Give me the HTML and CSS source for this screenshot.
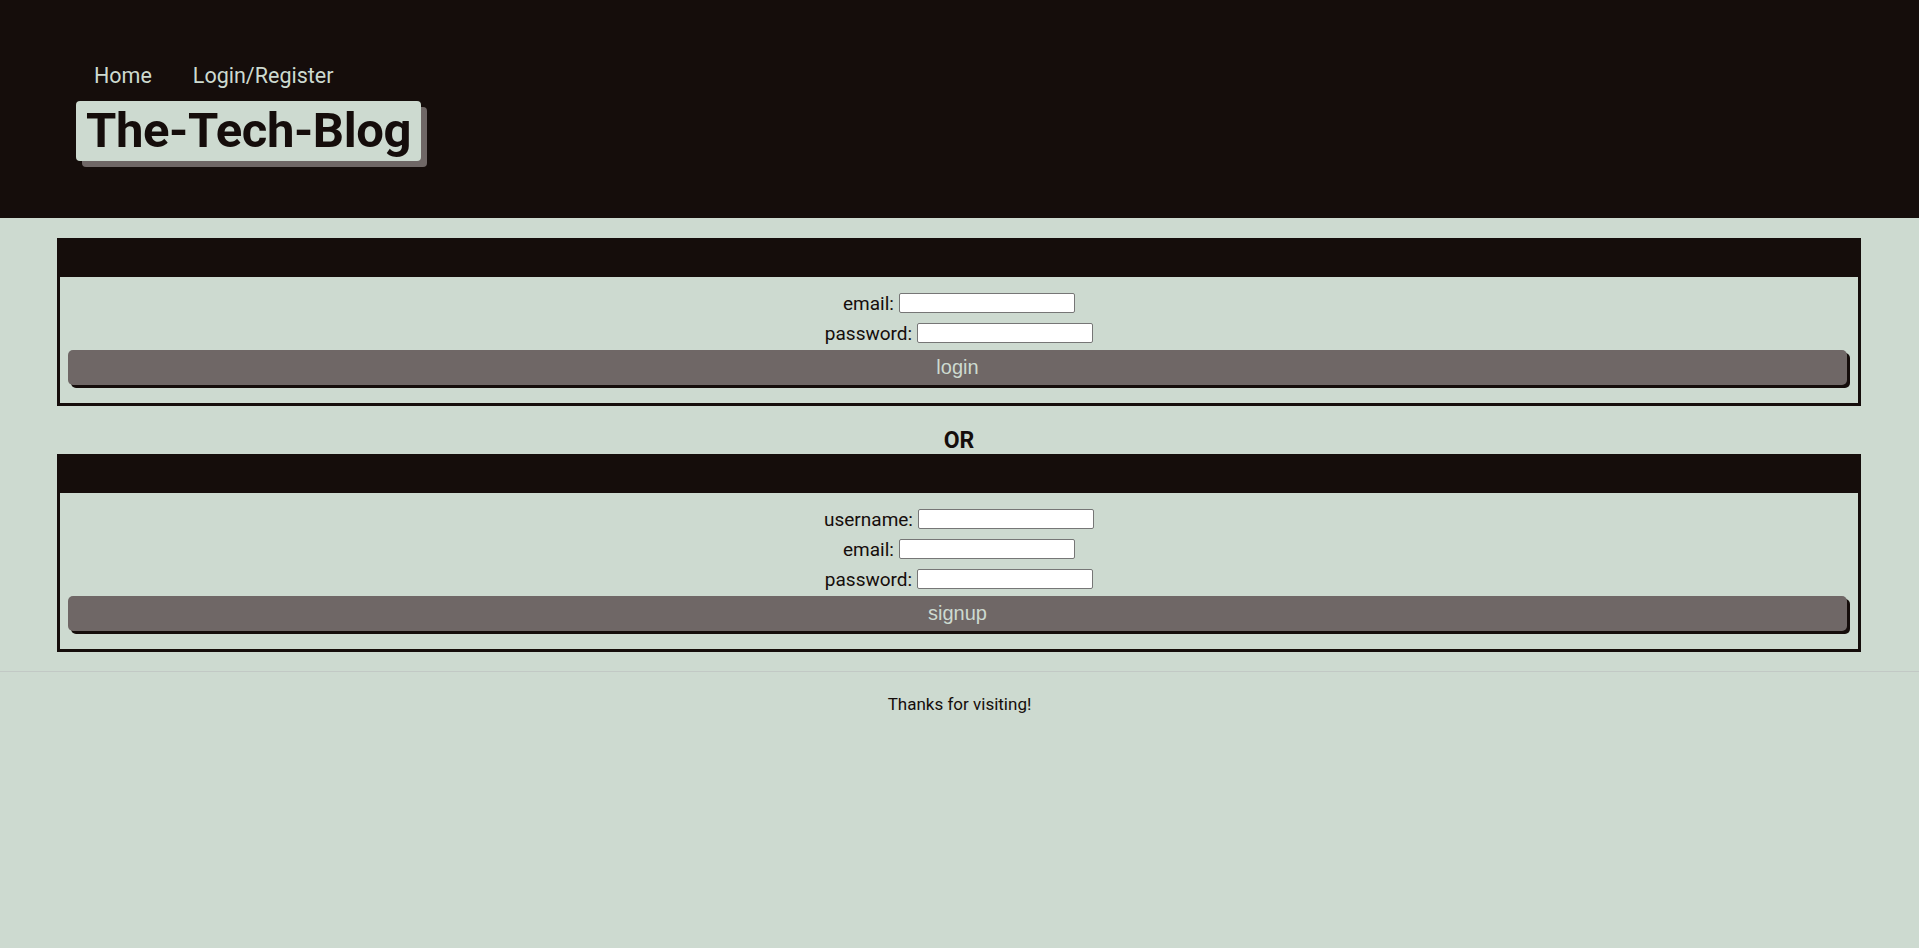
FILE: index.html
```html
<!DOCTYPE html>
<html lang="en">
<head>
<meta charset="utf-8">
<title>The-Tech-Blog</title>
<link rel="stylesheet" href="styles.css">
</head>
<body>
<header class="site-header">
  <nav class="nav">
    <a class="nav-link" href="#">Home</a>
    <a class="nav-link" href="#">Login/Register</a>
  </nav>
  <h1 class="brand">The-Tech-Blog</h1>
</header>
<main class="main">
  <section class="card">
    <div class="card-head"></div>
    <form class="card-body">
      <div class="field"><label>email:</label> <input type="text"></div>
      <div class="field"><label>password:</label> <input type="password"></div>
      <button class="btn" type="button">login</button>
    </form>
  </section>
  <div class="or">OR</div>
  <section class="card">
    <div class="card-head"></div>
    <form class="card-body">
      <div class="field"><label>username:</label> <input type="text"></div>
      <div class="field"><label>email:</label> <input type="text"></div>
      <div class="field"><label>password:</label> <input type="password"></div>
      <button class="btn" type="button">signup</button>
    </form>
  </section>
</main>
<footer class="footer">Thanks for visiting!</footer>
</body>
</html>
```
FILE: styles.css
```css
html, body {
  margin: 0;
  padding: 0;
}
body {
  background: #cddad0;
  color: #150d0b;
  font-family: "Roboto", "Liberation Sans", sans-serif;
  min-height: 948px;
}
.site-header {
  background: #150d0b;
  height: 218px;
  box-sizing: border-box;
  padding: 61px 0 0 76px;
}
.nav {
  display: flex;
  gap: 41px;
  padding-left: 18px;
}
.nav-link {
  color: #cddad0;
  text-decoration: none;
  font-size: 21.5px;
  line-height: 30px;
}
.brand {
  display: inline-block;
  margin: 10px 0 0 0;
  background: #cddad0;
  color: #150d0b;
  font-size: 49px;
  font-weight: 700;
  letter-spacing: -0.4px;
  line-height: 60px;
  padding: 0 10px;
  border-radius: 4px;
  box-shadow: 6px 6px 0 #6f6766;
}
.main {
  padding: 20px 58px 0 57px;
}
.card {
  border: 3px solid #150d0b;
}
.card-head {
  background: #150d0b;
  height: 36px;
}
.card-body {
  display: flex;
  flex-direction: column;
  align-items: center;
  padding: 16px 8px 18px;
  margin: 0;
}
.field {
  font-size: 19px;
  line-height: 30px;
  height: 30px;
  display: flex;
  align-items: flex-start;
  gap: 5px;
}
.field label {
  line-height: 22px;
}
.field input {
  width: 176px;
  height: 20px;
  box-sizing: border-box;
  border: 1px solid #767676;
  border-radius: 2px;
  background: #fff;
  margin: 0;
}
.btn {
  align-self: stretch;
  margin-top: -3px;
  margin-right: 3px;
  height: 35px;
  background: #6f6766;
  color: #cddad0;
  border: none;
  border-radius: 5px;
  box-shadow: 3px 3px 0 #150d0b;
  font-family: "Liberation Sans", Arial, sans-serif;
  font-size: 20px;
}
.or {
  text-align: center;
  font-weight: 700;
  font-size: 23px;
  line-height: 26px;
  margin: 22px 0 0;
  height: 26px;
}
.footer {
  margin-top: 19px;
  border-top: 1px solid #c2c9c5;
  text-align: center;
  font-size: 17px;
  padding-top: 22px;
}
```
